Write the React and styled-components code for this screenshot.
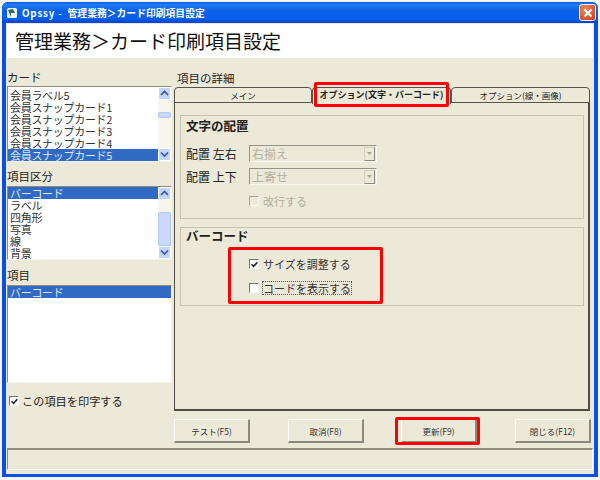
import React from 'react'
import styled, { createGlobalStyle } from 'styled-components'

const FONT = `'Noto Sans CJK JP', 'Liberation Sans', sans-serif`
const BEIGE = '#ece9d8'

const GlobalStyle = createGlobalStyle`
  html, body {
    margin: 0;
    padding: 0;
    background: #f4f4f4;
  }
  * { box-sizing: border-box; }
`

const Page = styled.div`
  position: relative;
  width: 600px;
  height: 480px;
  padding: 2px 2px 3px;
  overflow: hidden;
  font-family: ${FONT};
  color: #222;
`

const Window = styled.div`
  height: 100%;
  display: flex;
  flex-direction: column;
  border-radius: 6px 6px 0 0;
  overflow: hidden;
  background: #0a4fe0;
`

const TitleBar = styled.div`
  height: 21px;
  flex: none;
  display: flex;
  align-items: center;
  padding: 0 2px 0 4px;
  gap: 4px;
  background: linear-gradient(180deg, #0a58e0 0%, #1f7cf2 12%, #0a5fe6 45%, #0560ee 80%, #0340c8 100%);
`

const AppIcon = styled.svg`
  width: 12px;
  height: 12px;
  flex: none;
`

const TitleText = styled.div`
  flex: 1;
  color: #fff;
  font-size: 9.8px;
  font-weight: 700;
  white-space: nowrap;
`

const TitleApp = styled.span`
  letter-spacing: 0.8px;
  margin-right: 5px;
`

const CloseButton = styled.div`
  width: 17px;
  height: 17px;
  border: 1px solid #f3f3f3;
  border-radius: 3px;
  background: radial-gradient(circle at 35% 30%, #ef8a62, #d94f24 70%, #c03a10);
  display: flex;
  align-items: center;
  justify-content: center;
`

const Client = styled.div`
  flex: 1;
  margin: 0 4px 3px;
  background: ${BEIGE};
  display: flex;
  flex-direction: column;
  padding: 1px 1px 0;
  min-height: 0;
`

const Banner = styled.h1`
  margin: 0;
  height: 34px;
  flex: none;
  background: #fff;
  font-size: 19px;
  font-weight: 400;
  line-height: 33px;
  padding-left: 8px;
  color: #111;
  white-space: nowrap;
`

const Body = styled.div`
  flex: 1;
  display: grid;
  grid-template-columns: 165px 416px;
  column-gap: 2px;
  padding-top: 12px;
  min-height: 0;
`

const LeftColumn = styled.div`
  display: flex;
  flex-direction: column;
`

const RightColumn = styled.div`
  display: flex;
  flex-direction: column;
`

const FieldLabel = styled.div`
  font-size: 11.5px;
  line-height: 14px;
  height: ${p => p.$height || 16}px;
  padding-top: ${p => p.$top || 0}px;
  padding-left: ${p => p.$left || 0}px;
  color: #222;
`

const ListBox = styled.div`
  height: ${p => p.$height}px;
  flex: none;
  display: flex;
  background: #fff;
  border-top: 1px solid #8f8c7d;
  border-left: 1px solid #8f8c7d;
  border-right: 1px solid #f4f3ec;
  border-bottom: 1px solid #f4f3ec;
  margin-bottom: ${p => p.$gap || 0}px;
  overflow: hidden;
`

const ListRows = styled.div`
  flex: 1;
  min-width: 0;
  padding-top: ${p => p.$top || 0}px;
`

const ListRow = styled.div`
  height: 12px;
  line-height: 12px;
  font-size: 11px;
  letter-spacing: -0.3px;
  padding-left: 2px;
  white-space: nowrap;
  color: ${p => (p.$selected ? '#dfe7f7' : '#333')};
  background: ${p => (p.$selected ? '#316ac5' : 'transparent')};
`

const ScrollBar = styled.div`
  width: 13px;
  flex: none;
  display: flex;
  flex-direction: column;
  background: #f6f5ee;
`

const ScrollButton = styled.div`
  height: 13px;
  flex: none;
  border: 1px solid #fff;
  border-radius: 2px;
  background: #c3d5fb;
  display: flex;
  align-items: center;
  justify-content: center;
`

const ScrollTrack = styled.div`
  flex: 1;
  display: flex;
  flex-direction: column;
  padding-top: ${p => p.$offset}px;
`

const ScrollThumb = styled.div`
  height: ${p => p.$size}px;
  border: 1px solid #b0c6f3;
  border-radius: 2px;
  background: #c9d9fb;
`

const PrintOption = styled.div`
  margin-top: 11px;
  padding-left: 2px;
  display: flex;
  align-items: center;
  gap: 3px;
  font-size: 11.2px;
  line-height: 14px;
`

const Box = styled.span`
  width: 10px;
  height: 10px;
  flex: none;
  display: inline-flex;
  align-items: center;
  justify-content: center;
  background: ${p => (p.$disabled ? BEIGE : '#fff')};
  border-top: 1px solid ${p => (p.$disabled ? '#a8a597' : '#77756a')};
  border-left: 1px solid ${p => (p.$disabled ? '#a8a597' : '#77756a')};
  border-right: 1px solid #f7f6f0;
  border-bottom: 1px solid #f7f6f0;
`

const Tabs = styled.div`
  display: flex;
  height: 16px;
  flex: none;
  position: relative;
  z-index: 1;
`

const Tab = styled.div`
  width: ${p => p.$width}px;
  flex: none;
  font-size: ${p => (p.$active ? 9 : 8.5)}px;
  line-height: 14px;
  text-align: center;
  white-space: nowrap;
  background: ${BEIGE};
  font-weight: ${p => (p.$active ? 700 : 400)};
  color: #222;
  border: 1px solid #55534a;
  border-bottom: ${p => (p.$active ? 'none' : '1px solid #55534a')};
  border-radius: 4px 4px 0 0;
  height: ${p => (p.$active ? 17 : 16)}px;
`

const TabPanel = styled.div`
  height: 309px;
  flex: none;
  margin-top: -1px;
  border: 1px solid #4e4c44;
  border-bottom-width: 2px;
  border-right-width: 2px;
  padding: 12px 4px 0 5px;
  display: flex;
  flex-direction: column;
  gap: 8px;
`

const Group = styled.section`
  height: ${p => p.$height}px;
  flex: none;
  border: 1px solid #c6c3b4;
  padding: ${p => p.$top}px 0 0 5px;
`

const GroupTitle = styled.div`
  font-size: 12.5px;
  font-weight: 700;
  line-height: 14px;
`

const SelectRow = styled.div`
  display: flex;
  align-items: center;
  height: 17px;
  margin-top: ${p => p.$top}px;
  font-size: 12px;
`

const SelectLabel = styled.div`
  width: 63px;
  flex: none;
  white-space: nowrap;
`

const Select = styled.div`
  width: 128px;
  height: 17px;
  display: flex;
  align-items: center;
  justify-content: space-between;
  padding: 0 1px 0 2px;
  font-size: 12px;
  color: #b2afa2;
  border-top: 1px solid #96938a;
  border-left: 1px solid #96938a;
  border-right: 1px solid #f7f6f0;
  border-bottom: 1px solid #f7f6f0;
`

const SelectArrow = styled.div`
  width: 11px;
  height: 14px;
  background: ${BEIGE};
  border: 1px solid #d4d1c3;
  border-right-color: #8c8a7f;
  border-bottom-color: #8c8a7f;
  display: flex;
  align-items: center;
  justify-content: center;
`

const CheckRow = styled.div`
  display: flex;
  align-items: center;
  gap: 4px;
  height: 14px;
  margin-top: ${p => p.$top}px;
  margin-left: 63px;
  font-size: 11px;
  color: ${p => (p.$disabled ? '#b2afa2' : '#333')};
`

const CheckText = styled.span`
  line-height: 12px;
  white-space: nowrap;
  outline: ${p => (p.$focused ? '1px dotted #555' : 'none')};
`

const ButtonBar = styled.div`
  display: flex;
  padding-top: 8px;
`

const Button = styled.div`
  width: 76px;
  height: 24px;
  margin-left: ${p => p.$left || 0}px;
  flex: none;
  font-size: 8.5px;
  line-height: 22px;
  text-align: center;
  white-space: nowrap;
  color: #333;
  background: ${BEIGE};
  border: 1px solid #fbfaf5;
  border-right: 2px solid #8c8a7f;
  border-bottom: 2px solid #8c8a7f;
`

const StatusBar = styled.div`
  flex: none;
  height: 22px;
  margin: 6px 0 4px;
  border-top: 2px solid #918e80;
  border-left: 1px solid #918e80;
  border-right: 1px solid #fbfaf5;
  border-bottom: 1px solid #fbfaf5;
`

const RedMark = styled.div`
  position: absolute;
  left: ${p => p.$x}px;
  top: ${p => p.$y}px;
  width: ${p => p.$w}px;
  height: ${p => p.$h}px;
  border: 3px solid #f00;
  border-radius: 2px;
  pointer-events: none;
  z-index: 5;
`

const Chevron = ({ down }) => (
  <svg width="9" height="7" viewBox="0 0 9 7">
    <path d={down ? 'M1 1.5 L4.5 5 L8 1.5' : 'M1 5 L4.5 1.5 L8 5'} fill="none" stroke="#3a5596" strokeWidth="1.6" />
  </svg>
)

const Scroller = ({ offset, size }) => (
  <ScrollBar>
    <ScrollButton><Chevron /></ScrollButton>
    <ScrollTrack $offset={offset}><ScrollThumb $size={size} /></ScrollTrack>
    <ScrollButton><Chevron down /></ScrollButton>
  </ScrollBar>
)

const Tick = () => (
  <svg width="7" height="7" viewBox="0 0 7 7">
    <path d="M0.5 3.2 L2.6 5.4 L6.4 1.2" fill="none" stroke="#222" strokeWidth="1.6" />
  </svg>
)

const DropArrow = () => (
  <SelectArrow>
    <svg width="5" height="3"><path d="M0 0 L5 0 L2.5 3 Z" fill="#a8a597" /></svg>
  </SelectArrow>
)

const CARDS = ['会員ラベル5', '会員スナップカード1', '会員スナップカード2', '会員スナップカード3', '会員スナップカード4', '会員スナップカード5']
const KINDS = ['バーコード', 'ラベル', '四角形', '写真', '線', '背景']

export default function App() {
  return (
    <Page>
      <GlobalStyle />
      <Window>
        <TitleBar>
          <AppIcon viewBox="0 0 12 12">
            <rect x="1" y="1" width="10" height="10" rx="1.5" fill="#e8efe6" />
            <path d="M2 3 L7 2 L10 8 L5 10 Z" fill="#3a6a55" />
            <rect x="5" y="6" width="5" height="4" fill="#f4f4f4" />
          </AppIcon>
          <TitleText><TitleApp>Opssy -</TitleApp>管理業務＞カード印刷項目設定</TitleText>
          <CloseButton>
            <svg width="10" height="10" viewBox="0 0 10 10">
              <path d="M1.5 1.5 L8.5 8.5 M8.5 1.5 L1.5 8.5" stroke="#fff" strokeWidth="2" />
            </svg>
          </CloseButton>
        </TitleBar>
        <Client>
          <Banner>管理業務＞カード印刷項目設定</Banner>
          <Body>
            <LeftColumn>
              <FieldLabel>カード</FieldLabel>
              <ListBox $height={76} $gap={7}>
                <ListRows $top={2}>
                  {CARDS.map((c, i) => <ListRow key={c} $selected={i === 5}>{c}</ListRow>)}
                </ListRows>
                <Scroller offset={12} size={6} />
              </ListBox>
              <FieldLabel $height={17}>項目区分</FieldLabel>
              <ListBox $height={74} $gap={8}>
                <ListRows>
                  {KINDS.map((c, i) => <ListRow key={c} $selected={i === 0}>{c}</ListRow>)}
                </ListRows>
                <Scroller offset={12} size={34} />
              </ListBox>
              <FieldLabel $height={17}>項目</FieldLabel>
              <ListBox $height={98}>
                <ListRows>
                  <ListRow $selected>バーコード</ListRow>
                </ListRows>
              </ListBox>
              <PrintOption>
                <Box><Tick /></Box>
                この項目を印字する
              </PrintOption>
            </LeftColumn>
            <RightColumn>
              <FieldLabel $height={17} $top={1} $left={3}>項目の詳細</FieldLabel>
              <Tabs>
                <Tab $width={138}>メイン</Tab>
                <Tab $width={139} $active>オプション(文字・バーコード)</Tab>
                <Tab $width={139}>オプション(線・画像)</Tab>
              </Tabs>
              <TabPanel>
                <Group $height={104} $top={3}>
                  <GroupTitle>文字の配置</GroupTitle>
                  <SelectRow $top={12}>
                    <SelectLabel>配置 左右</SelectLabel>
                    <Select>右揃え<DropArrow /></Select>
                  </SelectRow>
                  <SelectRow $top={6}>
                    <SelectLabel>配置 上下</SelectLabel>
                    <Select>上寄せ<DropArrow /></Select>
                  </SelectRow>
                  <CheckRow $top={9} $disabled>
                    <Box $disabled />
                    <CheckText>改行する</CheckText>
                  </CheckRow>
                </Group>
                <Group $height={79} $top={1}>
                  <GroupTitle>バーコード</GroupTitle>
                  <CheckRow $top={14}>
                    <Box><Tick /></Box>
                    <CheckText>サイズを調整する</CheckText>
                  </CheckRow>
                  <CheckRow $top={10}>
                    <Box />
                    <CheckText $focused>コードを表示する</CheckText>
                  </CheckRow>
                </Group>
              </TabPanel>
              <ButtonBar>
                <Button>テスト(F5)</Button>
                <Button $left={38}>取消(F8)</Button>
                <Button $left={37}>更新(F9)</Button>
                <Button $left={38}>閉じる(F12)</Button>
              </ButtonBar>
            </RightColumn>
          </Body>
          <StatusBar />
        </Client>
      </Window>
      <RedMark $x={314} $y={82} $w={135} $h={25} />
      <RedMark $x={228} $y={247} $w={155} $h={57} />
      <RedMark $x={395} $y={417} $w={85} $h={28} />
    </Page>
  )
}
